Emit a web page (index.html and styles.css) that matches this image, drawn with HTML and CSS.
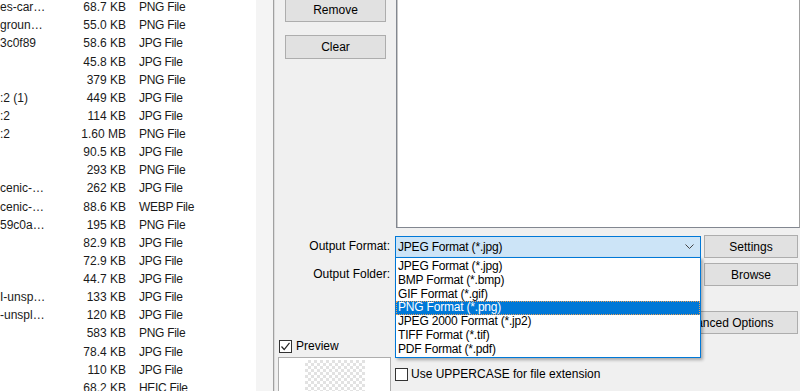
FILE: index.html
```html
<!DOCTYPE html>
<html lang="en">
<head>
    <meta charset="UTF-8">
    <title>Batch Image Converter</title>
    <link rel="stylesheet" href="styles.css">
</head>
<body>
    <div class="window">
        <!-- File browser list -->
        <div class="files">
            <div class="file"><span class="name">es-car…</span><span class="size">68.7 KB</span><span class="type">PNG File</span></div>
            <div class="file"><span class="name">groun…</span><span class="size">55.0 KB</span><span class="type">PNG File</span></div>
            <div class="file"><span class="name">3c0f89</span><span class="size">58.6 KB</span><span class="type">JPG File</span></div>
            <div class="file"><span class="name"></span><span class="size">45.8 KB</span><span class="type">JPG File</span></div>
            <div class="file"><span class="name"></span><span class="size">379 KB</span><span class="type">PNG File</span></div>
            <div class="file"><span class="name">:2 (1)</span><span class="size">449 KB</span><span class="type">JPG File</span></div>
            <div class="file"><span class="name">:2</span><span class="size">114 KB</span><span class="type">JPG File</span></div>
            <div class="file"><span class="name">:2</span><span class="size">1.60 MB</span><span class="type">PNG File</span></div>
            <div class="file"><span class="name"></span><span class="size">90.5 KB</span><span class="type">JPG File</span></div>
            <div class="file"><span class="name"></span><span class="size">293 KB</span><span class="type">PNG File</span></div>
            <div class="file"><span class="name">cenic-…</span><span class="size">262 KB</span><span class="type">JPG File</span></div>
            <div class="file"><span class="name">cenic-…</span><span class="size">88.6 KB</span><span class="type">WEBP File</span></div>
            <div class="file"><span class="name">59c0a…</span><span class="size">195 KB</span><span class="type">PNG File</span></div>
            <div class="file"><span class="name"></span><span class="size">82.9 KB</span><span class="type">JPG File</span></div>
            <div class="file"><span class="name"></span><span class="size">72.9 KB</span><span class="type">JPG File</span></div>
            <div class="file"><span class="name"></span><span class="size">44.7 KB</span><span class="type">JPG File</span></div>
            <div class="file"><span class="name">I-unsp…</span><span class="size">133 KB</span><span class="type">JPG File</span></div>
            <div class="file"><span class="name">-unspl…</span><span class="size">120 KB</span><span class="type">JPG File</span></div>
            <div class="file"><span class="name"></span><span class="size">583 KB</span><span class="type">PNG File</span></div>
            <div class="file"><span class="name"></span><span class="size">78.4 KB</span><span class="type">JPG File</span></div>
            <div class="file"><span class="name"></span><span class="size">110 KB</span><span class="type">JPG File</span></div>
            <div class="file"><span class="name"></span><span class="size">68.2 KB</span><span class="type">HEIC File</span></div>
        </div>

        <div class="splitter"></div>

        <!-- Converter panel -->
        <div class="panel">
            <div class="top">
                <div class="actions">
                    <button class="btn">Remove</button>
                    <button class="btn">Clear</button>
                </div>
                <div class="queue"></div>
            </div>

            <div class="field-row">
                <label class="label">Output Format:</label>
                <div class="combo">
                    <span>JPEG Format (*.jpg)</span>
                    <svg class="chevron" width="9" height="6" viewBox="0 0 9 6"><path d="M0.5 0.5 L4.5 4.5 L8.5 0.5" fill="none" stroke="#444" stroke-width="1"/></svg>
                    <ul class="options">
                        <li>JPEG Format (*.jpg)</li>
                        <li>BMP Format (*.bmp)</li>
                        <li>GIF Format (*.gif)</li>
                        <li class="selected">PNG Format (*.png)</li>
                        <li>JPEG 2000 Format (*.jp2)</li>
                        <li>TIFF Format (*.tif)</li>
                        <li>PDF Format (*.pdf)</li>
                    </ul>
                </div>
                <button class="btn">Settings</button>
            </div>

            <div class="field-row folder">
                <label class="label">Output Folder:</label>
                <div class="textbox"></div>
                <button class="btn">Browse</button>
            </div>

            <div class="field-row advanced">
                <button class="btn">Advanced Options</button>
            </div>

            <div class="bottom">
                <div class="preview">
                    <label class="check">
                        <span class="box">
                            <svg width="11" height="11" viewBox="0 0 11 11"><path d="M1.5 5.5 L4.2 8.5 L9.5 1.8" fill="none" stroke="#222" stroke-width="1.2"/></svg>
                        </span>
                        Preview
                    </label>
                    <div class="preview-box"><div class="checker"></div></div>
                </div>
                <label class="check upper"><span class="box"></span>Use UPPERCASE for file extension</label>
            </div>
        </div>
    </div>
</body>
</html>
```

FILE: styles.css
```css
body {
    margin: 0;
    font-family: "Liberation Sans", Arial, sans-serif;
    font-size: 12px;
    color: #000;
    background-color: #f0f0f0;
}
.window {
    display: flex;
    height: 391px;
    overflow: hidden;
}

/* file list */
.files {
    width: 256px;
    flex-shrink: 0;
    background-color: #fff;
    overflow: hidden;
}
.file {
    display: grid;
    grid-template-columns: 57px 56px 1fr;
    column-gap: 13px;
    height: 18.13px;
    line-height: 18px;
    color: #1a1a1a;
    white-space: nowrap;
}
.file:first-child {
    margin-top: -1.8px;
}
.size {
    text-align: right;
}
.type {
    letter-spacing: -0.3px;
}
.splitter {
    width: 17px;
    flex-shrink: 0;
    background-color: #f4f4f4;
    border-right: 1px solid #a0a0a0;
    box-shadow: 1px 0 0 #dcdcdc;
}

/* right panel */
.panel {
    flex: 1;
    display: flex;
    flex-direction: column;
    padding-left: 1px;
    overflow: hidden;
}
.panel > * {
    flex-shrink: 0;
}
.btn {
    font-family: inherit;
    font-size: 12px;
    color: #000;
    background-color: #e1e1e1;
    border: 1px solid #adadad;
    padding: 0;
    height: 23px;
}
.top {
    display: flex;
    height: 230px;
    margin-top: -2px;
}
.actions {
    display: flex;
    flex-direction: column;
    gap: 13px;
    width: 101px;
    margin-left: 10px;
}
.actions .btn {
    height: 24px;
}
.queue {
    flex: 1;
    margin-left: 10px;
    background-color: #fff;
    border: 1px solid #828790;
    border-right-color: #a0a0a0;
    box-shadow: inset 1px 0 0 #c8c8c8;
}

.field-row {
    display: grid;
    grid-template-columns: 117px 306px 94px;
    column-gap: 3px;
    height: 23px;
    margin-top: 7px;
}
.field-row.folder {
    margin-top: 5px;
}
.field-row.advanced {
    margin-top: 25px;
}
.advanced .btn {
    grid-column: 2 / 4;
    justify-self: end;
    width: 147px;
}
.label {
    text-align: right;
    padding-right: 2px;
    line-height: 23px;
}
.combo {
    position: relative;
    display: flex;
    align-items: center;
    justify-content: space-between;
    padding: 0 6px 0 2px;
    background-color: #cce4f7;
    border: 1px solid #0078d7;
    margin-top: 1px;
    letter-spacing: -0.2px;
}
.textbox {
    background-color: #fff;
    border: 1px solid #7a7a7a;
}

/* open dropdown list */
.options {
    position: absolute;
    left: -1px;
    right: -1px;
    top: 100%;
    margin: 0;
    padding: 2px 0 0;
    list-style: none;
    height: 97px;
    background-color: #fff;
    border: 1px solid #0078d7;
    box-shadow: 2px 2px 3px rgba(0, 0, 0, 0.3);
    z-index: 5;
}
.options li {
    height: 13.8px;
    line-height: 13.8px;
    padding-left: 2px;
    white-space: nowrap;
}
.options .selected {
    background-color: #0078d7;
    color: #fff;
    outline: 1px dotted #e8a05a;
    outline-offset: -1px;
}

/* bottom controls */
.bottom {
    display: grid;
    grid-template-columns: 117px 1fr;
    column-gap: 3px;
    margin-top: 6px;
}
.preview {
    padding-left: 3px;
}
.check {
    display: flex;
    align-items: center;
    gap: 4px;
    height: 13px;
    line-height: 13px;
    white-space: nowrap;
}
.preview .check {
    margin-left: 1px;
}
.box {
    width: 11px;
    height: 11px;
    flex-shrink: 0;
    border: 1px solid #333;
    background-color: #fff;
    display: flex;
}
.preview-box {
    width: 111px;
    height: 40px;
    margin-top: 4px;
    background-color: #fff;
    border: 1px solid #adadad;
}
.checker {
    width: 60px;
    height: 38px;
    margin: 2px 0 0 26px;
    background-color: #fff;
    background-image: repeating-conic-gradient(#e2e2e2 0 25%, #fff 0 50%);
    background-size: 6px 6px;
}
.upper {
    margin-top: 28px;
    gap: 3px;
}
```
